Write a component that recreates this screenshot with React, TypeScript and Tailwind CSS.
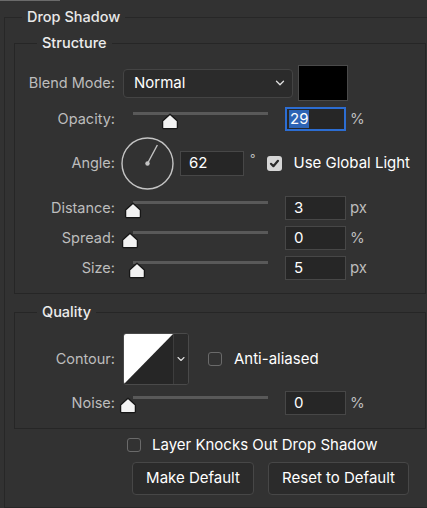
import { ChevronDown } from "lucide-react";

// Photoshop "Drop Shadow" layer style panel

function Label({ children }: { children: string }) {
  return (
    <div className="w-[100px] shrink-0 text-right text-[14.5px] leading-none text-[#bdbdbd]">{children}</div>
  );
}

function Thumb({ x }: { x: number }) {
  return (
    <svg className="absolute top-[6px]" style={{ left: x - 9 }} width="18" height="17" viewBox="0 0 18 17">
      <path
        d="M9 1.2 L16.4 8 L16.4 14.4 Q16.4 15.7 15.1 15.7 L2.9 15.7 Q1.6 15.7 1.6 14.4 L1.6 8 Z"
        fill="#f2f2f2"
        stroke="#161616"
        strokeWidth="1.3"
        strokeLinejoin="round"
      />
    </svg>
  );
}

// slider area runs from x=123 to x=268, track starts at 133
function Slider({ at }: { at: number }) {
  return (
    <div className="relative h-[24px] w-[145px] shrink-0">
      <div className="absolute left-[10px] right-0 top-[5px] h-[3px] bg-[#595959]" />
      <Thumb x={at - 123} />
    </div>
  );
}

function NumField({ value, unit, focused }: { value: string; unit: string; focused?: boolean }) {
  return (
    <div className="ml-[17px] flex items-center">
      {focused ? (
        <div className="flex h-[24px] w-[61px] items-center border-2 border-[#2c6dd2] bg-[#262626] pl-[2px]">
          <span className="bg-[#2d64b5] px-[1px] text-[15px] leading-[18px] text-white">{value}</span>
        </div>
      ) : (
        <div className="flex h-[24px] w-[61px] items-center border border-[#474747] bg-[#262626] pl-[8px] text-[15px] text-white">
          {value}
        </div>
      )}
      <span className="ml-[4px] text-[15px] text-[#bdbdbd]">{unit}</span>
    </div>
  );
}

function SliderRow({ label, at, value, unit, focused, mt }: { label: string; at: number; value: string; unit: string; focused?: boolean; mt: string }) {
  return (
    <div className={`flex h-[24px] items-center ${mt}`}>
      <Label>{label}</Label>
      <div className="ml-[8px] flex items-center">
        <Slider at={at} />
        <NumField value={value} unit={unit} focused={focused} />
      </div>
    </div>
  );
}

function CheckBox({ checked }: { checked?: boolean }) {
  if (checked) {
    return (
      <div className="flex h-[15px] w-[15px] shrink-0 items-center justify-center rounded-[3px] bg-[#d6d6d6]">
        <svg width="11" height="11" viewBox="0 0 11 11">
          <path d="M2 5.8 L4.4 8.2 L9 2.8" fill="none" stroke="#2a2a2a" strokeWidth="2.2" strokeLinecap="round" strokeLinejoin="round" />
        </svg>
      </div>
    );
  }
  return <div className="h-[14px] w-[14px] shrink-0 rounded-[3px] border border-[#6a6a6a]" />;
}

function AngleDial({ deg }: { deg: number }) {
  const r = 21;
  const a = (deg * Math.PI) / 180;
  return (
    <svg width="53" height="53" viewBox="0 0 53 53" className="shrink-0">
      <circle cx="26.5" cy="26.5" r="25.5" fill="none" stroke="#c4c4c4" strokeWidth="1.4" />
      <circle cx="26.5" cy="26.5" r="2.2" fill="#c4c4c4" />
      <line x1="26.5" y1="26.5" x2={26.5 + r * Math.cos(a)} y2={26.5 - r * Math.sin(a)} stroke="#c4c4c4" strokeWidth="1.4" />
    </svg>
  );
}

export default function App() {
  return (
    <div className="h-[508px] w-[427px] overflow-hidden bg-[#323232] font-['Inter','Liberation_Sans',sans-serif]">
      <div className="h-px w-[60px] bg-[#6b6b6b]" />
      <div className="pt-[6px]">
        <fieldset className="ml-[4px] h-[501px] w-[424px] border border-[#272727]">
          <legend className="ml-[17px] px-[5px] text-[14.5px] leading-[20px] font-medium text-[#e8e8e8]">Drop Shadow</legend>

          {/* Structure */}
          <fieldset className="ml-[9px] mt-[6px] w-[412px] border border-[#262626] pb-[13px] pt-[12px]">
            <legend className="ml-[22px] px-[5px] text-[14.5px] leading-[20px] font-medium text-[#ececec]">Structure</legend>

            <div className="flex h-[36px] items-center">
              <Label>Blend Mode:</Label>
              <div className="ml-[8px] flex h-[29px] w-[170px] items-center justify-between rounded-[4px] border border-[#444] bg-[#2b2b2b] pl-[10px] pr-[5px] text-[15px] text-white">
                <span>Normal</span>
                <ChevronDown size={14} strokeWidth={2.2} className="text-[#e0e0e0]" />
              </div>
              <div className="ml-[5px] h-[36px] w-[50px] border border-[#4a4a4a] bg-black" />
            </div>

            <SliderRow label="Opacity:" at={170} value="29" unit="%" focused mt="mt-[6px]" />

            <div className="mt-[6px] flex h-[52px] items-center">
              <Label>Angle:</Label>
              <div className="ml-[6px]">
                <AngleDial deg={62} />
              </div>
              <div className="ml-[6px] flex h-[25px] w-[64px] items-center border border-[#474747] bg-[#262626] pl-[8px] text-[15px] text-white">62</div>
              <span className="ml-[6px] self-start pt-[13px] text-[12px] text-[#bdbdbd]">°</span>
              <div className="ml-[12px] flex items-center">
                <CheckBox checked />
                <span className="ml-[11px] text-[15px] text-white">Use Global Light</span>
              </div>
            </div>

            <SliderRow label="Distance:" at={133} value="3" unit="px" mt="mt-[7px]" />
            <SliderRow label="Spread:" at={130} value="0" unit="%" mt="mt-[6px]" />
            <SliderRow label="Size:" at={137} value="5" unit="px" mt="mt-[6px]" />
          </fieldset>

          {/* Quality */}
          <fieldset className="ml-[9px] mt-[8px] w-[412px] border border-[#262626] pb-[13px] pt-[11px]">
            <legend className="ml-[22px] px-[5px] text-[14.5px] leading-[20px] font-medium text-[#ececec]">Quality</legend>

            <div className="flex h-[52px] items-center">
              <Label>Contour:</Label>
              <div className="ml-[8px] flex h-[52px] w-[66px] overflow-hidden rounded-[3px] border border-[#4a4a4a] bg-[#262626]">
                <svg width="49" height="50" viewBox="0 0 49 50" className="shrink-0">
                  <rect width="49" height="50" fill="#262626" />
                  <polygon points="0,0 49,0 0,50" fill="#ffffff" />
                </svg>
                <div className="flex flex-1 items-center justify-center border-l border-[#3d3d3d] bg-[#2b2b2b]">
                  <ChevronDown size={12} strokeWidth={2.2} className="text-[#e0e0e0]" />
                </div>
              </div>
              <div className="ml-[19px] flex items-center">
                <CheckBox />
                <span className="ml-[12px] text-[15px] text-white">Anti-aliased</span>
              </div>
            </div>

            <SliderRow label="Noise:" at={128} value="0" unit="%" mt="mt-[6px]" />
          </fieldset>

          <div className="ml-[122px] mt-[6px] flex h-[20px] items-center">
            <CheckBox />
            <span className="ml-[11px] text-[15px] text-white">Layer Knocks Out Drop Shadow</span>
          </div>

          <div className="ml-[127px] mt-[7px] flex gap-[14px]">
            <button className="h-[33px] w-[122px] rounded-[4px] border border-[#474747] bg-[#2b2b2b] text-[15px] text-white">Make Default</button>
            <button className="h-[33px] w-[141px] rounded-[4px] border border-[#474747] bg-[#2b2b2b] text-[15px] text-white">Reset to Default</button>
          </div>
        </fieldset>
      </div>
    </div>
  );
}
